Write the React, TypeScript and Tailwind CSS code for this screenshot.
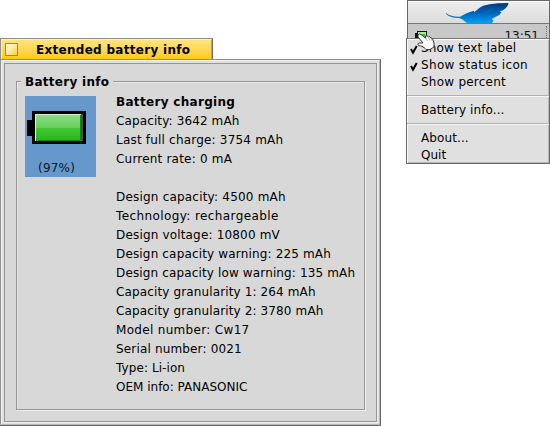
const details = [
  { text: 'Capacity: 3642 mAh', spacing: 'tracking-[0.12px]' },
  { text: 'Last full charge: 3754 mAh', spacing: 'tracking-[0.2px]' },
  { text: 'Current rate: 0 mA', spacing: 'tracking-[0.2px]' },
  { text: '', spacing: '' },
  { text: 'Design capacity: 4500 mAh', spacing: 'tracking-[0.2px]' },
  { text: 'Technology: rechargeable', spacing: 'tracking-[0.4px]' },
  { text: 'Design voltage: 10800 mV', spacing: 'tracking-[0.17px]' },
  { text: 'Design capacity warning: 225 mAh', spacing: 'tracking-[0.16px]' },
  { text: 'Design capacity low warning: 135 mAh', spacing: 'tracking-[0.14px]' },
  { text: 'Capacity granularity 1: 264 mAh', spacing: 'tracking-[0.13px]' },
  { text: 'Capacity granularity 2: 3780 mAh', spacing: 'tracking-[0.13px]' },
  { text: 'Model number: Cw17', spacing: 'tracking-[0.32px]' },
  { text: 'Serial number: 0021', spacing: 'tracking-[0.16px]' },
  { text: 'Type: Li-ion', spacing: 'tracking-[0.08px]' },
  { text: 'OEM info: PANASONIC', spacing: 'tracking-normal' },
];

function Battery() {
  return (
    <svg width="71" height="81" viewBox="0 0 71 81" shapeRendering="crispEdges" className="absolute inset-0">
      <defs>
        <linearGradient id="top" x1="0" y1="0" x2="0" y2="1">
          <stop offset="0" stopColor="#8fdc86" />
          <stop offset="1" stopColor="#62cf58" />
        </linearGradient>
        <linearGradient id="low" x1="0" y1="0" x2="0" y2="1">
          <stop offset="0" stopColor="#48c53a" />
          <stop offset="1" stopColor="#27b818" />
        </linearGradient>
      </defs>
      <path d="M7 15h54v33H7V40H2V24h5z" fill="#000" />
      <path d="M10 18h48v27H10z" fill="#0d8d09" />
      <path d="M10 18h46v1H11v26h-1z" fill="#d3f3cf" />
      <path d="M11 19h44v13H11z" fill="url(#top)" />
      <path d="M11 32h44v12H11z" fill="url(#low)" />
      <path d="M56 18h2v27h-2z" fill="#504b50" />
    </svg>
  );
}

function BatteryWindow() {
  return (
    <section className="mt-[38px] h-[388px] w-[381px] shrink-0">
      <div className="flex h-[21px] w-[213px] items-center border-t border-l border-r border-t-[#909090] border-l-[#909090] border-r-[#707070] bg-[#ffcb00]">
        <div className="flex h-full w-full items-center border-t border-l border-r border-t-[#fff0a8] border-l-[#fff0a8] border-r-[#d8a600] bg-linear-to-b from-[#ffe47c] to-[#ffca00] pl-[3px]">
          <span className="h-[13px] w-[13px] border border-[#b88b00] bg-linear-to-br from-[#fffce8] to-[#ffd02b]" />
          <b className="ml-[18px] text-[12px] leading-[18px] tracking-[0.29px] whitespace-nowrap">Extended battery info</b>
        </div>
      </div>
      <div className="h-[367px] border border-t-[#909090] border-r-[#686868] border-b-[#686868] border-l-[#909090] bg-[#e0e0e0]">
        <div className="h-full border border-t-[#f0f0f0] border-r-[#b8b8b8] border-b-[#b8b8b8] border-l-[#f0f0f0] p-[2px]">
          <div className="h-full border border-[#969696] bg-[#d8d8d8] px-[11px] pt-[17px] pb-[10px] shadow-[1px_1px_#f0f0f0]">
            <div className="relative h-[329px] w-[349px] border border-[#969696] shadow-[1px_1px_#f0f0f0,inset_1px_1px_#e8e8e8]">
              <b className="absolute top-[-9px] left-[4px] bg-[#d8d8d8] px-[4px] text-[12px] leading-[19px] tracking-[0.28px]">Battery info</b>
              <div className="flex pt-[10px] pl-[8px]">
                <div className="relative mt-[4px] h-[81px] w-[71px] shrink-0 bg-[#6698cb]">
                  <Battery />
                  <span className="absolute top-[64px] left-[13px] text-[12px] leading-[17px] tracking-[0.2px] text-[#101820]">(97%)</span>
                </div>
                <div className="ml-[20px] pt-px text-[12px] leading-[19px] whitespace-nowrap">
                  <b className="block h-[19px] tracking-[0.31px]">Battery charging</b>
                  {details.map(({ text, spacing }, i) => (
                    <div key={i} className={`h-[19px] ${spacing}`}>{text}</div>
                  ))}
                </div>
              </div>
            </div>
          </div>
        </div>
      </div>
    </section>
  );
}

function MenuItem({ label, checked = false, spacing = 'tracking-[0.1px]' }: { label: string; checked?: boolean; spacing?: string }) {
  return (
    <div className="flex h-[17px] items-center pl-[2px]">
      <svg width="12" height="12" viewBox="0 0 12 12" className="shrink-0">
        {checked && <path d="M2 6l2 3.7L7.7 3" fill="none" stroke="#000" strokeWidth="2" />}
      </svg>
      <span className={`text-[12px] leading-[17px] whitespace-nowrap ${spacing}`}>{label}</span>
    </div>
  );
}

function Divider() {
  return <div className="mt-[4px] mb-[5px] h-[2px] border-t border-b border-t-[#b2b2b2] border-b-[#f5f5f5]" />;
}

function Deskbar() {
  return (
    <aside className="relative ml-[25px] h-[164px] w-[144px] shrink-0">
      <div className="ml-[1px] h-[38px] overflow-hidden border-r border-l border-r-[#686868] border-l-[#686868]">
        <div className="flex h-[24px] border-t border-b border-t-[#686868] border-b-[#777] bg-linear-to-b from-[#eeeeee] to-[#dcdcdc] pl-[38px] shadow-[inset_0_1px_#fff]">
          <svg width="64" height="22" viewBox="0 0 64 22">
            <defs>
              <linearGradient id="leaf" x1="0" y1="0" x2="0" y2="1">
                <stop offset="0" stopColor="#033a76" />
                <stop offset=".5" stopColor="#0065bb" />
                <stop offset="1" stopColor="#00a0fa" />
              </linearGradient>
            </defs>
            <path d="M0 12Q5 16 14 15.7L19 13Q23 11 28 9.7L28 11.3L34 6.5L37 4.7Q43 3 52 2.3L62.5 2Q62 6 57.3 9L53.3 10.7L55.5 11Q54 14 51.3 15L45.7 18L47.5 19.5L46 22H21L16 18.3L13 16.9Q5 17.3 0 13Z" fill="url(#leaf)" />
            <path d="M14 16.5Q29 18 47 8" fill="none" stroke="#0873c4" strokeWidth=".6" />
          </svg>
        </div>
        <div className="relative flex h-[14px] justify-end bg-[#c8c8c8] pt-[3px] pr-[10px]">
          <svg width="14" height="9" viewBox="0 0 14 9" shapeRendering="crispEdges" className="absolute top-[7px] left-[7px]">
            <path d="M2 0h10v9H2V7H0V2h2z" fill="#111" />
            <path d="M3 1h8v8H3z" fill="#a8eda2" />
            <path d="M4 3h6v6H4z" fill="#37bd2b" />
          </svg>
          <span className="text-[12px] leading-[19px] text-[#101010]">13:51</span>
          <i className="absolute top-[2px] right-[2px] h-[12px] border-l border-dotted border-[#777]" />
        </div>
      </div>
      <div className="h-[126px] border border-t-[#777] border-r-[#686868] border-b-[#686868] border-l-[#686868] bg-[#e0e0e0] pt-px shadow-[inset_1px_1px_#fafafa,inset_-1px_-1px_#b8b8b8]">
        <MenuItem label="Show text label" checked spacing="tracking-[0.17px]" />
        <MenuItem label="Show status icon" checked spacing="tracking-[0.33px]" />
        <MenuItem label="Show percent" spacing="tracking-[0.24px]" />
        <Divider />
        <MenuItem label="Battery info..." />
        <Divider />
        <MenuItem label="About..." />
        <MenuItem label="Quit" spacing="tracking-normal" />
      </div>
      <svg width="20" height="18" viewBox="0 0 20 18" className="absolute top-[33px] left-[11px]">
        <path d="M1 2Q2 0 4 1.5L8.5 5L8.5 3Q10 2 11.5 4Q13 3 14 5Q15.5 5 16 7L17 10V14L13 16.5H9L6 13.5L1.5 12.5Q0 10.5 2 10H6L1 4Z" fill="#fff" stroke="#3c3c3c" strokeWidth="1" />
        <path d="M8.5 5l2 3M11.5 4.5l1.5 3M14 5.5l1 2.5" stroke="#999" strokeWidth=".7" />
      </svg>
    </aside>
  );
}

export default function App() {
  return (
    <main className="flex h-[426px] w-[550px] items-start overflow-hidden bg-white font-['DejaVu_Sans',sans-serif] text-black">
      <BatteryWindow />
      <Deskbar />
    </main>
  );
}
